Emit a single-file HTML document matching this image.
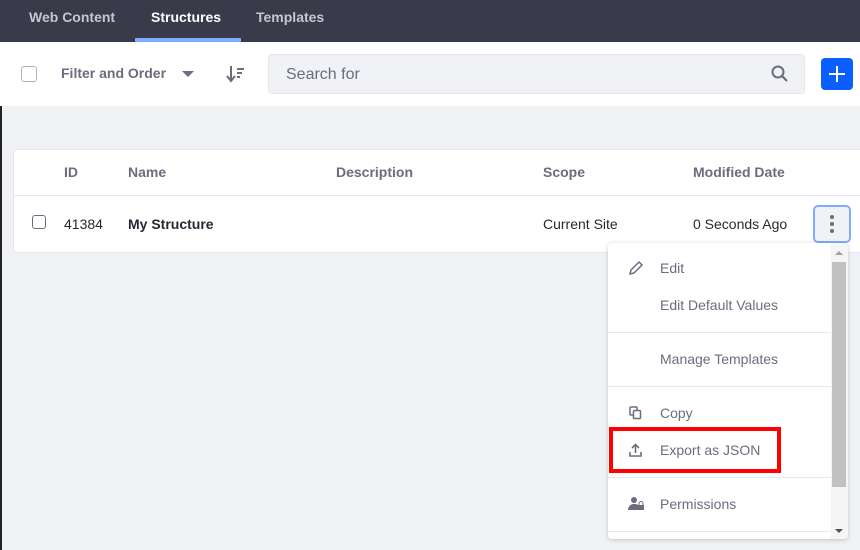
<!DOCTYPE html>
<html><head><meta charset="utf-8"><style>
*{box-sizing:border-box;margin:0;padding:0}
body{width:860px;height:550px;overflow:hidden;background:#f1f2f5;font-family:"Liberation Sans",sans-serif;position:relative;color:#272833}
.abs{position:absolute}
.nav{left:0;top:0;width:860px;height:42px;background:#393a4a}
.nav span{position:absolute;top:9px;font-size:14px;font-weight:bold;color:#c5c6d0}
.tb{left:0;top:42px;width:860px;height:64px;background:#fff}
.cb{width:16px;height:16px;border:1px solid #b0b2bd;border-radius:3px;background:#fff}
.th{font-size:14px;font-weight:bold;color:#6b6c7e;top:164px}
.td{font-size:14px;color:#272833;top:216px}
.mi{position:absolute;left:52px;font-size:14px;color:#6b6c7e}
.dv{position:absolute;left:0;width:223px;height:1px;background:#e7e7ed}
</style></head><body>
<div class="abs" style="left:0;top:0;width:2px;height:550px;background:#222"></div>
<div class="abs nav">
<span style="left:29px">Web Content</span>
<span style="left:151px;color:#fff">Structures</span>
<span style="left:256px">Templates</span>
<div class="abs" style="left:135px;top:38px;width:106px;height:4px;background:#80acff"></div>
</div>
<div class="abs tb">
<div class="abs cb" style="left:21px;top:24px"></div>
<div class="abs" style="left:61px;top:23px;font-size:14px;font-weight:bold;color:#6b6c7e">Filter and Order</div>
<div class="abs" style="left:182px;top:29px;width:0;height:0;border-left:6px solid transparent;border-right:6px solid transparent;border-top:6px solid #6b6c7e"></div>
<svg class="abs" style="left:226px;top:23px" width="20" height="18" viewBox="0 0 20 18"><path d="M5 1v14M1 11l4 5 4-5" stroke="#6b6c7e" stroke-width="2" fill="none"/><path d="M11 4h7M11 8h5M11 12h3" stroke="#6b6c7e" stroke-width="2"/></svg>
<div class="abs" style="left:268px;top:12px;width:537px;height:40px;background:#f1f2f5;border:1px solid #e7e7ed;border-radius:4px"></div>
<div class="abs" style="left:286px;top:24px;font-size:16px;color:#6b6c7e">Search for</div>
<svg class="abs" style="left:771px;top:23px" width="18" height="18" viewBox="0 0 18 18"><circle cx="7" cy="7" r="5.5" stroke="#6b6c7e" stroke-width="2" fill="none"/><path d="M11 11l5 5" stroke="#6b6c7e" stroke-width="2.2"/></svg>
<div class="abs" style="left:821px;top:16px;width:32px;height:32px;background:#0b5fff;border-radius:4px"></div>
<div class="abs" style="left:829px;top:31px;width:16px;height:2px;background:#fff"></div>
<div class="abs" style="left:836px;top:24px;width:2px;height:16px;background:#fff"></div>
</div>
<div class="abs" style="left:13px;top:149px;width:860px;height:104px;background:#fff;border:1px solid #e7e7ed;border-radius:4px"></div>
<div class="abs" style="left:14px;top:195px;width:846px;height:1px;background:#e7e7ed"></div>
<div class="abs th" style="left:64px">ID</div>
<div class="abs th" style="left:128px">Name</div>
<div class="abs th" style="left:336px">Description</div>
<div class="abs th" style="left:543px">Scope</div>
<div class="abs th" style="left:693px">Modified Date</div>
<div class="abs cb" style="left:32px;top:215px;width:14px;height:14px;border-color:#6b6c7e"></div>
<div class="abs td" style="left:64px">41384</div>
<div class="abs td" style="left:128px;font-weight:bold">My Structure</div>
<div class="abs td" style="left:543px">Current Site</div>
<div class="abs td" style="left:693px">0 Seconds Ago</div>
<div class="abs" style="left:813px;top:205px;width:38px;height:38px;border:2px solid #80acff;border-radius:5px;background:#f1f2f5"></div>
<div class="abs" style="left:830px;top:215px;width:4px;height:4px;border-radius:2px;background:#6b6c7e;box-shadow:0 7px 0 #6b6c7e,0 14px 0 #6b6c7e"></div>
<div class="abs" style="left:608px;top:243px;width:240px;height:296px;background:#fff;border-radius:4px;box-shadow:0 1px 5px rgba(0,0,0,.2);overflow:hidden">
<svg class="abs" style="left:20px;top:17px" width="16" height="16" viewBox="0 0 16 16"><path d="M2 14l1-4 8-8 3 3-8 8z" stroke="#6b6c7e" stroke-width="1.5" fill="none"/></svg>
<div class="mi" style="top:17px">Edit</div>
<div class="mi" style="top:54px">Edit Default Values</div>
<div class="dv" style="top:89px"></div>
<div class="mi" style="top:108px">Manage Templates</div>
<div class="dv" style="top:143px"></div>
<svg class="abs" style="left:21px;top:163px" width="13" height="14" viewBox="0 0 13 14"><rect x="1" y="1" width="7" height="8" rx="1" stroke="#6b6c7e" stroke-width="1.5" fill="none"/><rect x="4.5" y="4.5" width="7" height="8" rx="1" stroke="#6b6c7e" stroke-width="1.5" fill="#fff"/></svg>
<div class="mi" style="top:162px">Copy</div>
<svg class="abs" style="left:21px;top:200px" width="13" height="14" viewBox="0 0 13 14"><path d="M6.5 10V2M3 5l3.5-3.5L10 5M1 9v4h11V9" stroke="#6b6c7e" stroke-width="1.6" fill="none"/></svg>
<div class="mi" style="top:199px">Export as JSON</div>
<div class="dv" style="top:234px"></div>
<svg class="abs" style="left:20px;top:253px" width="16" height="15" viewBox="0 0 16 15"><circle cx="6" cy="4" r="3" fill="#6b6c7e"/><path d="M0 14c0-4 3-6 6-6s4 1 4 1v5z" fill="#6b6c7e"/><rect x="10" y="9" width="6" height="5" fill="#6b6c7e"/><path d="M11 9V7.5a2 2 0 014 0V9" stroke="#6b6c7e" fill="none"/></svg>
<div class="mi" style="top:253px">Permissions</div>
<div class="dv" style="top:288px"></div>
<div class="abs" style="left:223px;top:0;width:17px;height:296px;background:#f5f5f5"></div>
<div class="abs" style="left:224px;top:19px;width:14px;height:225px;background:#c1c1c1"></div>
<div class="abs" style="left:227px;top:8px;border-left:4px solid transparent;border-right:4px solid transparent;border-bottom:4px solid #a0a0a0"></div>
<div class="abs" style="left:227px;top:286px;border-left:4px solid transparent;border-right:4px solid transparent;border-top:4px solid #505050"></div>
</div>
<div class="abs" style="left:609px;top:427px;width:172px;height:46px;border:4px solid #f00"></div>
</body></html>
